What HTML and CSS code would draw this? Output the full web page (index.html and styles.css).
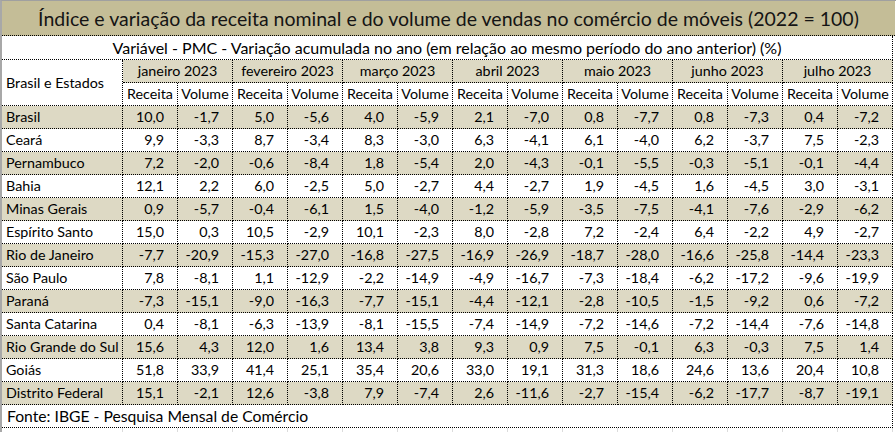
FILE: index.html
```html
<!DOCTYPE html>
<html lang="pt-BR">
<head>
<meta charset="utf-8">
<title>PMC móveis</title>
<link rel="stylesheet" href="styles.css">
</head>
<body>
<div class="sheet">
  <div class="title">Índice e variação da receita nominal e do volume de vendas no comércio de móveis (2022 = 100)</div>
  <table class="grid">
    <colgroup>
      <col class="c-name">
      <col class="c-num"><col class="c-num"><col class="c-num"><col class="c-num"><col class="c-num"><col class="c-num"><col class="c-num">
      <col class="c-num"><col class="c-num"><col class="c-num"><col class="c-num"><col class="c-num"><col class="c-num"><col class="c-num">
    </colgroup>
    <tbody>
      <tr class="r-sub"><td class="subtitle" colspan="15">Variável - PMC - Variação acumulada no ano (em relação ao mesmo período do ano anterior) (%)</td></tr>
      <tr class="r-head">
        <td class="name head-name" rowspan="2">Brasil e Estados</td>
        <td class="month" colspan="2">janeiro 2023</td>
        <td class="month" colspan="2">fevereiro 2023</td>
        <td class="month" colspan="2">março 2023</td>
        <td class="month" colspan="2">abril 2023</td>
        <td class="month" colspan="2">maio 2023</td>
        <td class="month" colspan="2">junho 2023</td>
        <td class="month" colspan="2">julho 2023</td>
      </tr>
      <tr class="r-head">
        <td class="var">Receita</td><td class="var">Volume</td>
        <td class="var">Receita</td><td class="var">Volume</td>
        <td class="var">Receita</td><td class="var">Volume</td>
        <td class="var">Receita</td><td class="var">Volume</td>
        <td class="var">Receita</td><td class="var">Volume</td>
        <td class="var">Receita</td><td class="var">Volume</td>
        <td class="var">Receita</td><td class="var">Volume</td>
      </tr>
      <tr class="row tan"><td class="name">Brasil</td><td>10,0</td><td>-1,7</td><td>5,0</td><td>-5,6</td><td>4,0</td><td>-5,9</td><td>2,1</td><td>-7,0</td><td>0,8</td><td>-7,7</td><td>0,8</td><td>-7,3</td><td>0,4</td><td>-7,2</td></tr>
      <tr class="row"><td class="name">Ceará</td><td>9,9</td><td>-3,3</td><td>8,7</td><td>-3,4</td><td>8,3</td><td>-3,0</td><td>6,3</td><td>-4,1</td><td>6,1</td><td>-4,0</td><td>6,2</td><td>-3,7</td><td>7,5</td><td>-2,3</td></tr>
      <tr class="row tan"><td class="name">Pernambuco</td><td>7,2</td><td>-2,0</td><td>-0,6</td><td>-8,4</td><td>1,8</td><td>-5,4</td><td>2,0</td><td>-4,3</td><td>-0,1</td><td>-5,5</td><td>-0,3</td><td>-5,1</td><td>-0,1</td><td>-4,4</td></tr>
      <tr class="row"><td class="name">Bahia</td><td>12,1</td><td>2,2</td><td>6,0</td><td>-2,5</td><td>5,0</td><td>-2,7</td><td>4,4</td><td>-2,7</td><td>1,9</td><td>-4,5</td><td>1,6</td><td>-4,5</td><td>3,0</td><td>-3,1</td></tr>
      <tr class="row tan"><td class="name">Minas Gerais</td><td>0,9</td><td>-5,7</td><td>-0,4</td><td>-6,1</td><td>1,5</td><td>-4,0</td><td>-1,2</td><td>-5,9</td><td>-3,5</td><td>-7,5</td><td>-4,1</td><td>-7,6</td><td>-2,9</td><td>-6,2</td></tr>
      <tr class="row"><td class="name">Espírito Santo</td><td>15,0</td><td>0,3</td><td>10,5</td><td>-2,9</td><td>10,1</td><td>-2,3</td><td>8,0</td><td>-2,8</td><td>7,2</td><td>-2,4</td><td>6,4</td><td>-2,2</td><td>4,9</td><td>-2,7</td></tr>
      <tr class="row tan"><td class="name">Rio de Janeiro</td><td>-7,7</td><td>-20,9</td><td>-15,3</td><td>-27,0</td><td>-16,8</td><td>-27,5</td><td>-16,9</td><td>-26,9</td><td>-18,7</td><td>-28,0</td><td>-16,6</td><td>-25,8</td><td>-14,4</td><td>-23,3</td></tr>
      <tr class="row"><td class="name">São Paulo</td><td>7,8</td><td>-8,1</td><td>1,1</td><td>-12,9</td><td>-2,2</td><td>-14,9</td><td>-4,9</td><td>-16,7</td><td>-7,3</td><td>-18,4</td><td>-6,2</td><td>-17,2</td><td>-9,6</td><td>-19,9</td></tr>
      <tr class="row tan"><td class="name">Paraná</td><td>-7,3</td><td>-15,1</td><td>-9,0</td><td>-16,3</td><td>-7,7</td><td>-15,1</td><td>-4,4</td><td>-12,1</td><td>-2,8</td><td>-10,5</td><td>-1,5</td><td>-9,2</td><td>0,6</td><td>-7,2</td></tr>
      <tr class="row"><td class="name">Santa Catarina</td><td>0,4</td><td>-8,1</td><td>-6,3</td><td>-13,9</td><td>-8,1</td><td>-15,5</td><td>-7,4</td><td>-14,9</td><td>-7,2</td><td>-14,6</td><td>-7,2</td><td>-14,4</td><td>-7,6</td><td>-14,8</td></tr>
      <tr class="row tan"><td class="name">Rio Grande do Sul</td><td>15,6</td><td>4,3</td><td>12,0</td><td>1,6</td><td>13,4</td><td>3,8</td><td>9,3</td><td>0,9</td><td>7,5</td><td>-0,1</td><td>6,3</td><td>-0,3</td><td>7,5</td><td>1,4</td></tr>
      <tr class="row"><td class="name">Goiás</td><td>51,8</td><td>33,9</td><td>41,4</td><td>25,1</td><td>35,4</td><td>20,6</td><td>33,0</td><td>19,1</td><td>31,3</td><td>18,6</td><td>24,6</td><td>13,6</td><td>20,4</td><td>10,8</td></tr>
      <tr class="row tan"><td class="name">Distrito Federal</td><td>15,1</td><td>-2,1</td><td>12,6</td><td>-3,8</td><td>7,9</td><td>-7,4</td><td>2,6</td><td>-11,6</td><td>-2,7</td><td>-15,4</td><td>-6,2</td><td>-17,7</td><td>-8,7</td><td>-19,1</td></tr>
      <tr class="r-foot"><td class="source" colspan="15">Fonte: IBGE - Pesquisa Mensal de Comércio</td></tr>
      <tr class="r-empty"><td></td><td></td><td></td><td></td><td></td><td></td><td></td><td></td><td></td><td></td><td></td><td></td><td></td><td></td><td></td></tr>
    </tbody>
  </table>
</div>
</body>
</html>
```

FILE: styles.css
```css
html, body {
  margin: 0;
  padding: 0;
  background: #ffffff;
}

body {
  font-family: Lato, "Open Sans", "DejaVu Sans", sans-serif;
  color: #000000;
}

.sheet {
  width: 894px;
  height: 431px;
  border-top: 1px solid #a0a0a0;
  border-left: 2px solid #a8a8a8;
  overflow: hidden;
}

.title {
  width: 893px;
  height: 34px;
  line-height: 36px;
  background: #c4bd97;
  border-bottom: 1px dotted #000;
  font-size: 19.5px;
  text-align: center;
  white-space: nowrap;
  color: #141414;
}

.grid {
  width: 891px;
  table-layout: fixed;
  border-collapse: separate;
  border-spacing: 0;
  font-size: 14.3px;
}

.c-name { width: 121px; }
.c-num { width: 55px; }

.grid td {
  padding: 0;
  border-right: 1px dotted #000;
  border-bottom: 1px dotted #000;
  white-space: nowrap;
  overflow: hidden;
  line-height: 18px;
}

.r-sub { height: 24px; }
.r-head { height: 23px; }
.row { height: 23px; }
.r-foot { height: 23px; }

.subtitle {
  text-align: center;
  font-size: 16px;
}

.month {
  background: #ddd9c4;
  text-align: center;
}

.var {
  text-align: center;
}

.row td {
  text-align: right;
  padding-right: 13px;
}

.row.tan td {
  background: #ddd9c4;
}

.grid .name,
.row td.name {
  text-align: left;
  padding-left: 4px;
  padding-right: 0;
}

.head-name {
  vertical-align: middle;
}

.source {
  font-size: 15.7px;
  padding-left: 5px !important;
}

.r-empty { height: 8px; }

.grid .r-empty td {
  border-bottom: none;
  border-right: 1px solid #dcdcdc;
}
```
